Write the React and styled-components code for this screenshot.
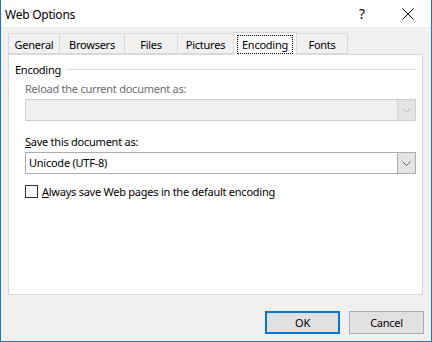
import React from 'react';
import styled, { createGlobalStyle } from 'styled-components';

const Global = createGlobalStyle`
  html, body { margin: 0; padding: 0; background: #fff; }
  * { box-sizing: border-box; }
  body {
    font-family: "Noto Sans", "Open Sans", sans-serif;
    font-size: 11px;
    letter-spacing: -0.25px;
    color: #000;
  }
`;

const tabs = [
  { label: 'General', width: 52 },
  { label: 'Browsers', width: 66 },
  { label: 'Files', width: 54 },
  { label: 'Pictures', width: 57 },
  { label: 'Encoding', width: 64, active: true },
  { label: 'Fonts', width: 52 },
];

//Small chevron used in the combo boxes
const Chevron = ({ color }) => (
  <svg width="9" height="5" viewBox="0 0 9 5">
    <polyline points="0.5,0.5 4.5,4.5 8.5,0.5" fill="none" stroke={color} strokeWidth="1" />
  </svg>
);

const App = () => (
  <>
    <Global />
    <Window>
      <TitleBar>
        <Title>Web Options</Title>
        <Caption>?</Caption>
        <Caption>
          <svg width="12" height="12" viewBox="0 0 12 12">
            <path d="M0.5 0.5 L11.5 11.5 M11.5 0.5 L0.5 11.5" stroke="#000" strokeWidth="1" />
          </svg>
        </Caption>
      </TitleBar>
      <Body>
        <TabRow>
          {tabs.map((t) => (
            <Tab key={t.label} $width={t.width} $active={t.active}>
              {t.active ? <Focus>{t.label}</Focus> : t.label}
            </Tab>
          ))}
        </TabRow>
        <Panel>
          <Group>
            <GroupHeader>
              <span>Encoding</span>
              <Rule />
            </GroupHeader>
            <GroupBody>
              <Label $disabled>Reload the current document as:</Label>
              <Combo $disabled>
                <ComboText />
                <DropButton $disabled>
                  <Chevron color="#b8b8b8" />
                </DropButton>
              </Combo>
              <Label $gap>
                <u>S</u>ave this document as:
              </Label>
              <Combo>
                <ComboText>Unicode (UTF-8)</ComboText>
                <DropButton>
                  <Chevron color="#606060" />
                </DropButton>
              </Combo>
              <CheckRow>
                <Box />
                <span>
                  <u>A</u>lways save Web pages in the default encoding
                </span>
              </CheckRow>
            </GroupBody>
          </Group>
        </Panel>
        <Buttons>
          <Button $default>OK</Button>
          <Button>Cancel</Button>
        </Buttons>
      </Body>
    </Window>
  </>
);

const Window = styled.div`
  width: 432px;
  height: 342px;
  display: flex;
  flex-direction: column;
  background: #f0f0f0;
  border: 1px solid #1979ca;
  border-top: none;
`;

const TitleBar = styled.div`
  height: 27px;
  background: #fff;
  display: flex;
  align-items: center;
`;

const Title = styled.div`
  flex: 1;
  padding-left: 4px;
  padding-top: 1px;
  font-size: 12px;
`;

const Caption = styled.div`
  width: 46px;
  height: 27px;
  display: flex;
  align-items: center;
  justify-content: center;
  font-size: 14px;
`;

const Body = styled.div`
  flex: 1;
  display: flex;
  flex-direction: column;
  padding: 6px 8px 7px 7px;
`;

const TabRow = styled.div`
  display: flex;
  align-items: flex-end;
  height: 21px;
`;

const Tab = styled.div`
  width: ${(p) => p.$width}px;
  height: ${(p) => (p.$active ? 23 : 21)}px;
  margin-left: -1px;
  margin-bottom: ${(p) => (p.$active ? -1 : 0)}px;
  &:first-child { margin-left: 0; }
  border: 1px solid #d9d9d9;
  border-bottom: ${(p) => (p.$active ? 'none' : '1px solid #d9d9d9')};
  background: ${(p) => (p.$active ? '#fff' : '#f0f0f0')};
  position: relative;
  z-index: ${(p) => (p.$active ? 2 : 1)};
  display: flex;
  align-items: center;
  justify-content: center;
  padding-top: ${(p) => (p.$active ? 0 : 1)}px;
`;

const Focus = styled.span`
  border: 1px dotted #000;
  padding: 1px 4px;
  line-height: 15px;
`;

const Panel = styled.div`
  flex: 1;
  background: #fff;
  border: 1px solid #d9d9d9;
  padding: 7px 6px 0 6px;
`;

const Group = styled.div`
  display: flex;
  flex-direction: column;
`;

const GroupHeader = styled.div`
  display: flex;
  align-items: center;
  gap: 6px;
  line-height: 15px;
`;

const Rule = styled.div`
  flex: 1;
  height: 1px;
  background: #dcdcdc;
`;

const GroupBody = styled.div`
  display: flex;
  flex-direction: column;
  padding-left: 10px;
`;

const Label = styled.div`
  line-height: 15px;
  margin-top: ${(p) => (p.$gap ? 13 : 4)}px;
  margin-bottom: 3px;
  color: ${(p) => (p.$disabled ? '#6d6d6d' : '#000')};
`;

const Combo = styled.div`
  height: 22px;
  display: flex;
  border: 1px solid ${(p) => (p.$disabled ? '#cccccc' : '#adadad')};
  background: ${(p) => (p.$disabled ? '#f0f0f0' : '#fff')};
`;

const ComboText = styled.div`
  flex: 1;
  padding-left: 3px;
  line-height: 20px;
`;

const DropButton = styled.div`
  width: 18px;
  display: flex;
  align-items: center;
  justify-content: center;
  background: ${(p) => (p.$disabled ? '#e3e3e3' : '#e5e5e5')};
  border-left: 1px solid ${(p) => (p.$disabled ? '#d5d5d5' : '#acacac')};
`;

const CheckRow = styled.div`
  display: flex;
  align-items: center;
  gap: 4px;
  margin-top: 10px;
  line-height: 15px;
`;

const Box = styled.div`
  width: 13px;
  height: 13px;
  border: 1px solid #333;
  background: #fff;
`;

const Buttons = styled.div`
  display: flex;
  justify-content: flex-end;
  gap: 9px;
  margin-top: 16px;
  margin-right: -1px;
`;

const Button = styled.div`
  width: 75px;
  height: 23px;
  display: flex;
  align-items: center;
  justify-content: center;
  background: #e1e1e1;
  border: ${(p) => (p.$default ? '2px solid #0078d7' : '1px solid #adadad')};
`;

export default App;
